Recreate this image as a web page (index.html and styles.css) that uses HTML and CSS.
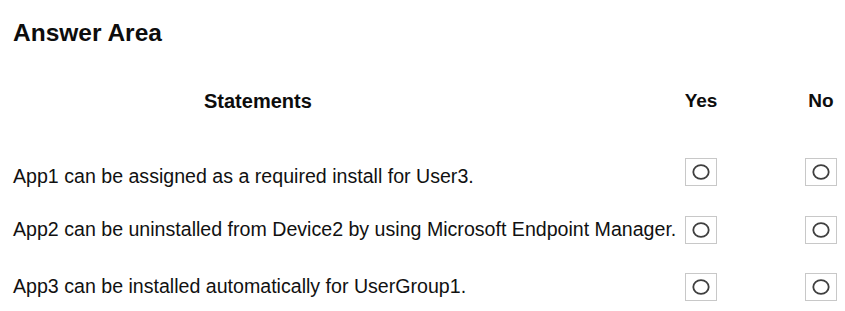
FILE: index.html
```html
<!DOCTYPE html>
<html lang="en">
<head>
<meta charset="utf-8">
<title>Answer Area</title>
<link rel="stylesheet" href="styles.css">
</head>
<body>
<main class="page">
  <h1 class="title">Answer Area</h1>
  <div class="table">
    <div class="head head-stmt">Statements</div>
    <div class="head col-yes">Yes</div>
    <div class="head col-no">No</div>

    <div class="stmt stmt-first">App1 can be assigned as a required install for User3.</div>
    <span class="box col-yes"><svg viewBox="0 0 20 18" class="radio"><ellipse cx="10" cy="9" rx="7.7" ry="6.8"/></svg></span>
    <span class="box col-no"><svg viewBox="0 0 20 18" class="radio"><ellipse cx="10" cy="9" rx="7.7" ry="6.8"/></svg></span>

    <div class="stmt">App2 can be uninstalled from Device2 by using Microsoft Endpoint Manager.</div>
    <span class="box col-yes"><svg viewBox="0 0 20 18" class="radio"><ellipse cx="10" cy="9" rx="7.7" ry="6.8"/></svg></span>
    <span class="box col-no"><svg viewBox="0 0 20 18" class="radio"><ellipse cx="10" cy="9" rx="7.7" ry="6.8"/></svg></span>

    <div class="stmt">App3 can be installed automatically for UserGroup1.</div>
    <span class="box col-yes"><svg viewBox="0 0 20 18" class="radio"><ellipse cx="10" cy="9" rx="7.7" ry="6.8"/></svg></span>
    <span class="box col-no"><svg viewBox="0 0 20 18" class="radio"><ellipse cx="10" cy="9" rx="7.7" ry="6.8"/></svg></span>
  </div>
</main>
</body>
</html>
```
FILE: styles.css
```css
html, body {
  margin: 0;
  padding: 0;
  background: #ffffff;
}

.page {
  padding: 19px 0 0 13px;
  font-family: "Liberation Sans", Arial, sans-serif;
  color: #111111;
}

.title {
  margin: 0;
  font-size: 24.5px;
  line-height: 28px;
  font-weight: bold;
  color: #0d0d0d;
}

.table {
  margin-top: 42px;
  display: grid;
  grid-template-columns: 672px 32px 88px 32px;
  row-gap: 29px;
  align-items: start;
}

.head {
  font-weight: bold;
  font-size: 19px;
  line-height: 24px;
  height: 40px;
  text-align: center;
  color: #0d0d0d;
}

.head-stmt {
  grid-column: 1;
  font-size: 20px;
  text-align: left;
  padding-left: 191px;
}

.col-yes {
  grid-column: 2;
  justify-self: center;
}

.col-no {
  grid-column: 4;
  justify-self: center;
}

.stmt {
  grid-column: 1;
  font-size: 19.6px;
  line-height: 22px;
  padding-top: 2px;
  white-space: nowrap;
}

.stmt-first {
  padding-top: 7px;
}

.box {
  width: 32px;
  height: 28px;
  box-sizing: border-box;
  border: 1px solid #c8c8c8;
  display: flex;
  align-items: center;
  justify-content: center;
  background: #ffffff;
}

.radio {
  width: 20px;
  height: 18px;
  fill: none;
  stroke: #3f3f3f;
  stroke-width: 1.8;
}
```
